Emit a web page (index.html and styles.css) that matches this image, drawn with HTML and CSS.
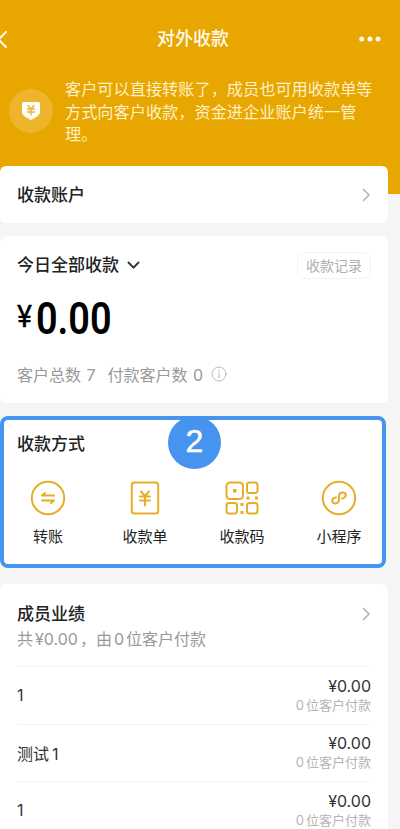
FILE: index.html
```html
<!DOCTYPE html>
<html lang="zh-CN">
<head>
<meta charset="utf-8">
<title>对外收款</title>
<link rel="stylesheet" href="styles.css">
</head>
<body>
<header class="nav">
  <svg class="back" width="10" height="20" viewBox="0 0 10 20"><path d="M6 3L-1.500 10.500L6 18"/></svg>
  <h1>对外收款</h1>
  <svg class="more" width="22" height="6" viewBox="0 0 22 6"><circle cx="2.700" cy="3" r="2.500"/><circle cx="11" cy="3" r="2.500"/><circle cx="19" cy="3" r="2.500"/></svg>
</header>
<section class="notice">
  <span class="shield"><svg width="20" height="20" viewBox="0 0 20 20"><path class="plate" d="M2.500 1H17.500Q19 1 19 2.500V11.500C19 14 14 17 10 19C6 17 1 14 1 11.500V2.500Q1 1 2.500 1Z"/><path class="yen" d="M7 4.500L10 8L13 4.500M6.500 8H13.500M6.500 11H13.500M10 8V14"/></svg></span>
  <p>客户可以直接转账了，成员也可用收款单等<br>方式向客户收款，资金进企业账户统一管<br>理。</p>
</section>
<main>
  <section class="card account">
    <h2>收款账户</h2>
    <svg class="arrow" width="9" height="14" viewBox="0 0 9 14"><path d="M1.500 1.500L7 7L1.500 12.500"/></svg>
  </section>
  <section class="card today">
    <div class="row">
      <h2>今日全部收款</h2>
      <svg class="down" width="13" height="9" viewBox="0 0 13 9"><path d="M1.500 1.500L6.500 6.700L11.500 1.500"/></svg>
      <span class="record">收款记录</span>
    </div>
    <div class="amount"><span class="sign">¥</span><span class="figure">0.00</span></div>
    <div class="stats"><span>客户总数 7</span><span>付款客户数 0</span>
      <svg width="16" height="16" viewBox="0 0 16 16"><circle cx="8" cy="8" r="7"/><path d="M8 7V12M8 4V5"/></svg>
    </div>
  </section>
  <section class="methods">
    <span class="step">2</span>
    <h2>收款方式</h2>
    <ul>
      <li><svg width="36" height="36" viewBox="0 0 36 36"><circle cx="18" cy="18" r="16.200"/><path d="M24 15.500H12L15 13M12 20.500H24L21 23"/></svg><span>转账</span></li>
      <li><svg width="36" height="36" viewBox="0 0 36 36"><rect x="4.800" y="2.500" width="26.400" height="31" rx="2.500"/><path d="M14 11.500L18 16L22 11.500M13 16.500H23M13 20.500H23M18 16V25.500"/></svg><span>收款单</span></li>
      <li><svg width="36" height="36" viewBox="0 0 36 36"><rect x="2.500" y="2.500" width="16.500" height="16.500" rx="3.500"/><rect x="23" y="2.500" width="10.500" height="10.500" rx="2.500"/><rect x="2.500" y="23" width="10.500" height="10.500" rx="2.500"/><rect x="23" y="23" width="10.500" height="10.500" rx="2.500"/><path class="dots" d="M9 9h3.500v3.500H9zM22.500 16.500h3v3h-3zM31 16.500h3v3h-3zM16.500 23h3v3h-3zM16.500 31h3v3h-3z"/></svg><span>收款码</span></li>
      <li><svg width="36" height="36" viewBox="0 0 36 36"><circle cx="18" cy="18" r="16.200"/><path d="M15 17.500C9.500 18 10.500 24 14.500 23.500C17 23.200 18 22 18 20V16C18 14 19 12.500 21.500 12.500C25.500 12.500 26.500 17.500 21 18.500"/></svg><span>小程序</span></li>
    </ul>
  </section>
  <section class="card members">
    <div class="heading">
      <h2>成员业绩</h2>
      <svg class="arrow" width="9" height="14" viewBox="0 0 9 14"><path d="M1.500 1.500L7 7L1.500 12.500"/></svg>
    </div>
    <p class="summary">共<i>¥0.00</i>，由<i>0</i>位客户付款</p>
    <div class="member"><span>1</span><div><b>¥0.00</b><small><i>0</i>位客户付款</small></div></div>
    <div class="member"><span>测试<i>1</i></span><div><b>¥0.00</b><small><i>0</i>位客户付款</small></div></div>
    <div class="member"><span>1</span><div><b>¥0.00</b><small><i>0</i>位客户付款</small></div></div>
  </section>
</main>
</body>
</html>
```
FILE: styles.css
```css
* { box-sizing: border-box; margin: 0; padding: 0; }
html { height: 829px; overflow: hidden; }
body {
  height: 829px;
  overflow: hidden;
  background: linear-gradient(#e7a600 0 194.500px, #f5f5f5 194.500px);
  font-family: Inter, "Noto Sans CJK SC", sans-serif;
  color: #222;
}
svg { display: block; flex: none; fill: none; stroke-linecap: round; stroke-linejoin: round; }
i { font-style: normal; }
h1, h2 { font-weight: 500; white-space: nowrap; }
h2 { font-size: 17px; line-height: 24px; }

.nav { display: flex; align-items: center; height: 76px; padding: 2px 19px 0 0; }
.nav h1 { flex: 1; margin-left: 147px; font-size: 18px; line-height: 26px; color: #fffaf0; }
.back { stroke: #fffaf0; stroke-width: 2; }
.more { fill: #fffaf0; }

.notice { display: flex; height: 90px; padding: 2px 0 0 9px; }
.shield {
  display: flex; align-items: center; justify-content: center;
  width: 44px; height: 44px; margin: 11px 12px 0 0;
  border-radius: 50%; background: #edb52b; flex: none;
}
.plate { fill: #fffdf5; }
.yen { stroke: #e8b239; stroke-width: 1.300; }
.notice p { font-size: 16.200px; line-height: 22.500px; color: #fff0c8; white-space: nowrap; }

.card { width: 388px; background: #fff; border-radius: 6px; }
.account { display: flex; align-items: center; justify-content: space-between; height: 57px; padding: 0 17px; }
.arrow { stroke: #b5b5b5; stroke-width: 1.700; }

.today { height: 167px; margin-top: 13px; padding: 14px 17px 0; }
.row { display: flex; align-items: center; height: 30px; }
.down { margin-left: 8px; stroke: #333; stroke-width: 1.900; }
.record {
  margin-left: auto; padding: 0 8px; height: 27px; line-height: 25px;
  border: 1px solid #f3f3f3; border-radius: 8px; font-size: 14px; color: #b0b0b0;
}
.amount { display: flex; height: 62px; padding-top: 13px; color: #000; }
.sign { width: 19px; padding-top: 7px; font: 400 31px/34px Roboto, sans-serif; transform: scaleX(.92); transform-origin: left; -webkit-text-stroke: .4px #000; }
.figure { font: 600 44px/52px "Roboto", sans-serif; transform: scaleX(.86); transform-origin: left; }
.stats { display: flex; align-items: center; gap: 12px; height: 24px; margin-top: 20px; font-size: 16px; color: #999; white-space: nowrap; }
.stats span { word-spacing: 1px; }
.stats svg { stroke: #bbb; stroke-width: 1; margin-left: -4px; }

.methods {
  position: relative; width: 386px; height: 152px; margin-top: 13px;
  padding: 12px 0 0 13px; background: #fff; border: 4px solid #4793f0; border-radius: 8px;
}
.step {
  position: absolute; left: 164px; top: -4px; width: 53px; height: 53px;
  border-radius: 50%; background: #4793f0; color: #fff;
  font: 32px/51px "Liberation Sans", sans-serif; text-align: center;
  -webkit-text-stroke: .5px #fff;
}
.methods ul { display: flex; margin: 24px 0 0 -17.500px; list-style: none; }
.methods li { display: flex; flex: none; flex-direction: column; align-items: center; width: 97px; font-size: 15px; line-height: 22px; color: #222; }
.methods li svg { margin-bottom: 10px; stroke: #e8ad28; stroke-width: 2; }
.methods .dots { fill: #e8ad28; stroke: none; }

.members { height: 260px; margin-top: 16px; padding: 17px 17px 0; }
.heading { display: flex; align-items: center; justify-content: space-between; height: 25px; }
.summary { height: 40px; font-size: 16px; line-height: 26px; color: #999; white-space: nowrap; }
.summary i { margin: 0 2px; }
.member { display: flex; align-items: center; justify-content: space-between; height: 57.500px; border-top: 1px solid #f4f4f4; font-size: 16px; color: #333; }
.member span i { margin-left: 3px; }
.member div { display: flex; flex-direction: column; align-items: flex-end; }
.member b { font-weight: 400; font-size: 16px; line-height: 19px; }
.member small { font-size: 13px; line-height: 18px; color: #b4b4b4; }
.member small i { margin-right: 2px; }
```
